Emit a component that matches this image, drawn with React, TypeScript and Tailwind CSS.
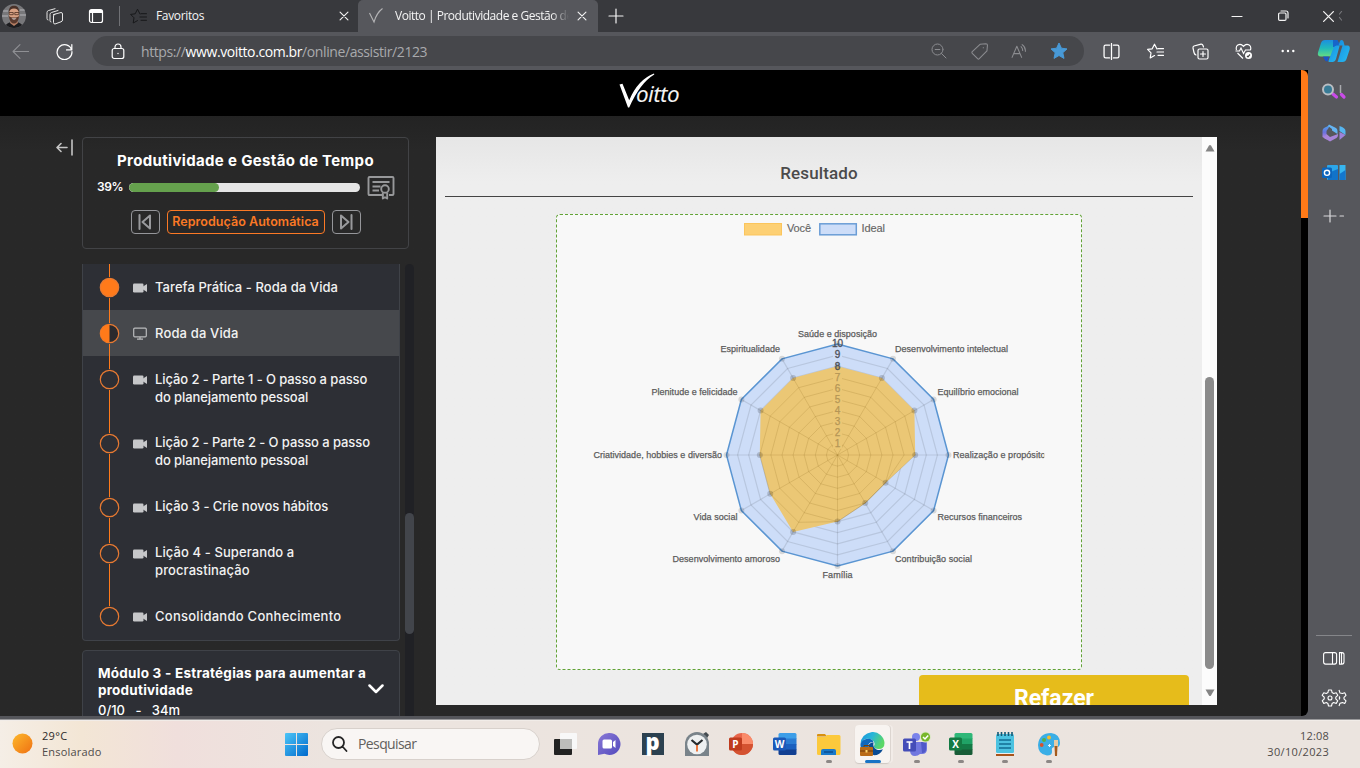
import React from "react";

const UI = "font-['Open_Sans',sans-serif]";
const MONT = "font-[Inter,sans-serif]";

function Line({ d, size = 16, box = 16, className = "", w = 1 }: { d: string; size?: number; box?: number; className?: string; w?: number }) {
  return (
    <svg width={size} height={size} viewBox={`0 0 ${box} ${box}`} fill="none" stroke="currentColor" strokeWidth={w} strokeLinecap="round" strokeLinejoin="round" className={`shrink-0 ${className}`}>
      <path d={d} />
    </svg>
  );
}

const CLOSE = "M3.5 3.5l9 9M12.5 3.5l-9 9";
const STAR_LIST = "M10 6L7.500 1.200 5.200 5.800 0.600 6.400 4 9.800 3.200 15 7.500 12.600M11 5.700H16.500M10 9h6.500M11 12.300h5.500";

function Avatar() {
  return (
    <svg width="24" height="24" viewBox="0 0 24 24" className="shrink-0">
      <defs>
        <clipPath id="av"><circle cx="12" cy="12" r="12" /></clipPath>
      </defs>
      <g clipPath="url(#av)">
        <rect width="24" height="24" fill="#77777a" />
        <path d="M0 7h6M0 12h6M18 6h6M18 11h6" stroke="#96969a" strokeWidth="2" />
        <path d="M3 24c0-5 5-6 9-6s9 1 9 6z" fill="#1c1c1f" />
        <path d="M9 16h6l1 3-4 3-4-3z" fill="#b98065" />
        <ellipse cx="12" cy="10" rx="5.2" ry="7.2" fill="#d8a183" />
        <path d="M6.8 12c1 6 3 7.5 5.2 7.5s4.200-1.500 5.200-7.500c-1.500 1-3 1.500-5.200 1.500s-3.700-.5-5.200-1.500z" fill="#5a3a2e" />
        <path d="M6.800 8.500C7 3 9 1.800 12 1.800s5 1.200 5.200 6.700C16 6 15 4.500 12 4.500S8 6 6.800 8.500z" fill="#4a3128" />
        <path d="M7 8.500h4.200v2.200H7.400zM12.800 8.500H17l-.4 2.200h-3.800z" fill="none" stroke="#4c3022" strokeWidth=".8" />
        <path d="M9.500 14.500q2.500 1.800 5 0z" fill="#fff" />
      </g>
    </svg>
  );
}

function TabBar() {
  return (
    <div className={`flex h-8 w-full shrink-0 bg-[#38393d] text-[12px] text-[#f4f4f4] ${UI}`}>
      <div className="flex w-[28px] items-center pl-[2px]"><Avatar /></div>
      <div className="flex w-[52px] items-center justify-center">
        <Line size={17} box={17} className="text-[#e6e6e6]" d="M7.500 6.500L15 4.500Q16.500 4.500 16.500 6v6Q16.500 13.300 15 13.800L9 16Q7.500 16 7.500 14.500V8Q7.500 6.500 9 6.300M5 14Q4 14 4 12.500V6.500Q4 5 5.500 4.500L12 2.500M2 12Q1 12 1 10.500V4.500Q1 3 2.500 2.500L9 .7" />
      </div>
      <div className="flex w-[32px] items-center justify-center">
        <svg width="16" height="16" viewBox="0 0 16 16" fill="none" stroke="#fff" strokeWidth="1.200"><rect x="1.500" y="1.500" width="13" height="13" rx="2" /><path d="M2 3.500h12" strokeWidth="3" /><path d="M4.500 5v9" /></svg>
      </div>
      <div className="flex w-[18px] items-center pl-[7px]"><div className="h-5 w-px bg-[#707175]" /></div>
      <div className="flex w-[228px] items-center">
        <Line size={17} box={17} className="text-[#17181a]" d={STAR_LIST} />
        <span className="ml-[9px] tracking-[-0.35px]">Favoritos</span>
        <Line className="mr-[7px] ml-auto" size={14} d={CLOSE} w={1.300} />
      </div>
      <div className="flex w-[240px] items-center rounded-t-[5px] bg-[#56575c]">
        <svg width="16" height="18" viewBox="0 0 16 18" className="ml-[10px] shrink-0"><path d="M1.500 6L6 15Q8.500 6 14.500 1.500" fill="none" stroke="#b5b5b7" strokeWidth="1.100" /></svg>
        <span className="ml-[11px] w-[174px] overflow-hidden tracking-[-0.48px] whitespace-nowrap [mask-image:linear-gradient(to_right,#000_90%,transparent)]">Voitto | Produtividade e Gestão de</span>
        <Line className="ml-[6px]" size={14} d={CLOSE} w={1.300} />
      </div>
      <div className="flex w-[35px] items-center justify-center"><Line size={16} d="M8 1v14M1 8h14" w={1.200} /></div>
      <div className="ml-auto flex">
        <div className="flex w-[46px] items-center justify-center"><Line size={12} box={12} d="M1 6.500h10" w={1.200} /></div>
        <div className="flex w-[46px] items-center justify-center"><Line size={12} box={12} d="M2.800 3h5q1.200 0 1.200 1.200v5q0 1.200-1.200 1.200h-5q-1.200 0-1.200-1.200v-5Q1.600 3 2.800 3M4 1h5q2 0 2 2v5" w={1.200} /></div>
        <div className="flex w-[54px] items-center pl-[16px]"><Line size={13} box={12} d="M1.500 1.500l9 9M10.500 1.500l-9 9" w={1.200} /><Line size={10} box={10} className="ml-[3px] text-[#77787c]" d="M3.500 0.500L1.500 3M1.500 6.500L3.500 9" w={1.200} /></div>
      </div>
    </div>
  );
}

function Cell({ w, children }: { w: string; children: React.ReactNode }) {
  return <div className={`flex shrink-0 items-center justify-center ${w}`}>{children}</div>;
}

function Toolbar() {
  return (
    <div className={`flex h-[38px] w-full shrink-0 items-center bg-[#56575c] text-white ${UI}`}>
      <Cell w="w-[40px]"><Line size={17} className="text-[#8f9094]" d="M7.500 1.500L1 8l6.500 6.500M1 8h15" /></Cell>
      <Cell w="w-[48px]"><Line size={17} d="M14.700 6.500A7 7 0 1 0 15 8M14.900 1.500v5h-5" w={1.150} /></Cell>
      <div className="ml-[4px] flex h-[30px] w-[992px] items-center rounded-full bg-[#46474b]">
        <svg width="14" height="17" viewBox="0 0 14 17" fill="none" stroke="#fff" strokeWidth="1.200" className="ml-[19px]"><rect x="1.200" y="5.500" width="11.600" height="10" rx="2" /><path d="M4 5.500V4a3 3 0 0 1 6 0v1.500" /><circle cx="7" cy="10.500" r=".7" fill="#fff" stroke="none" /></svg>
        <span className="ml-[16px] text-[14px] tracking-[-0.4px] whitespace-nowrap text-[#a9aaad]">https://<span className="text-white">www.voitto.com.br</span>/online/assistir/2123</span>
        <div className="mr-[6px] ml-auto flex text-[#8b8c90]">
          <Cell w="w-[40px]"><Line d="M10.500 10.500L15 15M12 6.500a5.500 5.500 0 1 1-11 0a5.500 5.500 0 0 1 11 0M4.200 6.500h4.600" /></Cell>
          <Cell w="w-[40px]"><Line size={17} d="M8.500 1.200L14 .7Q15.500.7 15.500 2L15 7.500 7.800 14.800Q7 15.500 6.200 14.800L1.200 9.800Q.5 9 1.200 8.200zM11.500 4.500h.3" /></Cell>
          <Cell w="w-[40px]"><Line size={17} d="M1 13.500L5.500 3 10 13.500M2.600 10h5.800M9.500 3.500Q11 5 11 7M10.500 1.500Q14 4 13.500 8" /></Cell>
          <Cell w="w-[39px]"><svg width="18" height="18" viewBox="0 0 18 18"><path d="M9 1l2.400 5.200 5.600.7-4.200 3.800 1.200 5.700L9 13.500l-5 2.900 1.200-5.700L1 6.900l5.600-.7z" fill="#4899d6" stroke="#4899d6" strokeWidth="1" strokeLinejoin="round" /></svg></Cell>
        </div>
      </div>
      <div className="ml-[5px] flex">
        <Cell w="w-[44px]"><Line size={17} d="M6.200 2H2.500Q1 2 1 3.500v9Q1 14 2.500 14h3.700M9.800 2h3.700Q15 2 15 3.500v9q0 1.500-1.500 1.500H9.800M8 .5v15" w={1.200} /></Cell>
        <Cell w="w-[45px]"><Line size={17} box={17} d={STAR_LIST} w={1.200} /></Cell>
        <Cell w="w-[44px]"><Line size={17} box={17} d="M7.500 6H14.500Q16 6 16 7.500v7q0 1.500-1.500 1.500h-7Q6 16 6 14.500v-7Q6 6 7.500 6M11 8.500v5M8.500 11h5M4 12Q2.500 11.500 2 9.500L1 5Q.8 3.500 2 3L9 1.200Q10.500 1 11 2.500L11.500 4" w={1.200} /></Cell>
        <Cell w="w-[44px]">
          <svg width="18" height="17" viewBox="0 0 18 17" fill="none" stroke="#fff" strokeWidth="1.150"><path d="M1.500 7Q.5 3.500 2.800 2 6 .3 8.500 3.300 11 .3 14.200 2 16.500 3.500 15.500 7M.5 8h4l1.500-3 2.500 5.500L10.500 7h5M2.500 10l5.500 5.500" /><circle cx="13.500" cy="12.500" r="3.500" fill="#fff" stroke="none" /><path d="M12 12.800l1 1 2-2.300" stroke="#444" /></svg>
        </Cell>
        <Cell w="w-[43px]"><svg width="14" height="4" viewBox="0 0 14 4" fill="#fff"><circle cx="1.700" cy="2" r="1.200" /><circle cx="7" cy="2" r="1.200" /><circle cx="12.300" cy="2" r="1.200" /></svg></Cell>
      </div>
      <svg width="34" height="24" viewBox="0 0 34 24" className="ml-[8px] shrink-0">
        <defs>
          <linearGradient id="cp1" x1="0" y1="0" x2="0" y2="1"><stop stopColor="#1c8fe0" /><stop offset=".5" stopColor="#21b9ba" /><stop offset="1" stopColor="#65dc82" /></linearGradient>
          <linearGradient id="cp2" x1="0" y1="0" x2="1" y2="1"><stop stopColor="#168de0" /><stop offset="1" stopColor="#27bdf2" /></linearGradient>
        </defs>
        <path d="M8 1h12l-4.500 14q-.8 2.500-3.500 2.500H4Q0 17.500 1 13.500L4 4Q5 1 8 1z" fill="url(#cp1)" />
        <path d="M16 1h4.500l2 4-1.500 3h-5z" fill="#1765ca" />
        <path d="M16.500 9q.8-2.500 3.200-2.500h3L19 20q-.8 3-3 3h-4q-1 0-.3-2z" fill="url(#cp2)" />
        <path d="M6 17.500h6l-1.500 5q-2.500 0-3-2z" fill="#1a55c8" />
        <path d="M21.500 6.500L23 2q.5-1 1.800-1 1.200 0 1.700 1.500L27.500 6.500h3.500Q33.500 7 32.500 11L29.500 20q-1 3-4 3h-5l5-16.500z" fill="url(#cp2)" />
      </svg>
    </div>
  );
}

function EdgeSidebar() {
  return (
    <div className="flex w-[52px] shrink-0 flex-col items-center bg-[#56575c] text-white">
      <svg width="26" height="19" viewBox="0 0 26 19" className="mt-[12px]">
        <path d="M12 12l3.500 3M20.500 12.500l2.500 2.500" stroke="#c94be8" strokeWidth="3.200" strokeLinecap="round" />
        <circle cx="7" cy="7.500" r="5" fill="#387b96" stroke="#b9bdc2" strokeWidth="2" /><path d="M19.500 3v8" stroke="#a9aaae" strokeWidth="1.500" />
      </svg>
      <svg width="26" height="20" viewBox="0 0 26 20" className="mt-[22px]">
        <defs><linearGradient id="m3" x1="0" y1="0" x2="0" y2="1"><stop stopColor="#4ca9ee" /><stop offset=".5" stopColor="#6b70dd" /><stop offset="1" stopColor="#c490e0" /></linearGradient></defs>
        <path d="M9 2L3 5Q1.500 6 1.500 8v6l4 2.500V8.500Q5.500 7 7 6z" fill="url(#m3)" />
        <path d="M8 1.500L15 5q1.500 1 1.500 3v3L11 7.500V6L7 3z" fill="#64b4f3" />
        <path d="M3 15l6 3.500 6.500-3.500q1.500-1 1.500-3v-1L9 14 5.500 11z" fill="#a985d9" />
        <path d="M18.500 3q6 2 6 5v4l-6-4z" fill="#55b5f0" /><path d="M18.500 9l6 3-6 5z" fill="#9d83db" />
      </svg>
      <svg width="26" height="18" viewBox="0 0 26 18" className="mt-[21px]">
        <rect x="6" y="1" width="11" height="15" rx="1" fill="#2ca6e9" /><path d="M7 9l10-4v11H7z" fill="#1173c9" /><rect x="18.500" y="1" width="6" height="15" fill="#37b6f0" /><path d="M18.500 10l6-4v10h-6z" fill="#1477ce" /><rect x="1" y="3.500" width="10" height="10.500" rx="1.500" fill="#0b65bd" /><circle cx="6" cy="8.800" r="2.600" fill="none" stroke="#fff" strokeWidth="1.400" />
      </svg>
      <Line size={22} box={22} className="mt-[23px] text-[#d9d9db]" d="M7 5v12M1 11h12M17 11h3.500" w={1.200} />
      <div className="mt-auto h-px w-9 bg-[#85868a]" />
      <svg width="22" height="13" viewBox="0 0 22 13" fill="none" stroke="#fff" strokeWidth="1.100" className="mt-[16px]"><rect x=".6" y=".6" width="13" height="11.500" rx="2" /><path d="M9.500.6v11.500M16.500.6h2.500q2 0 2 2v7.500q0 2-2 2h-2.500zM18.500.6v11.500" /></svg>
      <svg width="26" height="20" viewBox="0 0 26 20" fill="none" stroke="#fff" strokeWidth="1.100" strokeLinejoin="round" className="mt-[23px] mb-[8px]">
        <path d="M7.500 2h3l.6 2.600 1.600.9 2.500-.8 1.600 2.600-2 1.900v1.700l2 1.900-1.600 2.600-2.500-.8-1.600.9-.6 2.500h-3l-.6-2.500-1.600-.9-2.500.8-1.600-2.600 2-1.900V9.200l-2-1.900 1.600-2.600 2.500.8 1.600-.9z" /><circle cx="9" cy="10" r="2" />
        <path d="M18 2l1 3 2.500.5 2.200-.8L25 7.300l-2 2v1.600l2 2-1.300 2.500-2.200-.8-2.500.6-1 2.800M18 8.500q1.500 1.500 0 3" />
      </svg>
    </div>
  );
}

function VoittoLogo() {
  return (
    <div className="flex h-[39px] items-end">
      <svg width="36" height="36" viewBox="0 0 36 36" className="-mr-[19px]"><path d="M.5 11.500l3-.8 6.700 16.500Q19 6.500 35 .5l.3 1Q21 10 10.200 34.500H9z" fill="#fff" /></svg>
      <span className="font-['Noto_Sans',sans-serif] text-[22.500px] leading-[30px] tracking-[-0.6px] text-[#f2f2f2] italic">oitto</span>
    </div>
  );
}

function CourseCard() {
  return (
    <div className="flex h-[112px] w-[327px] flex-col items-center rounded-[4px] border border-[#424346]">
      <div className={`mt-[12px] text-[15px] leading-[22px] font-bold tracking-[0.34px] whitespace-nowrap text-white ${MONT}`}>Produtividade e Gestão de Tempo</div>
      <div className="flex w-full items-center pl-[14px]">
        <span className={`w-[32px] text-[12px] leading-4 font-semibold tracking-[-0.4px] text-white ${MONT}`}>39%</span>
        <div className="mt-[2px] h-[9px] w-[231px] overflow-hidden rounded-full bg-[#e5e5e5]"><div className="h-full w-[90px] rounded-full bg-[#65a14d]" /></div>
        <svg width="28" height="26" viewBox="0 0 28 26" fill="none" stroke="#97989a" strokeWidth="1.900" strokeLinejoin="round" className="ml-[7px] mt-[3px]"><path d="M16.500 20H2.500Q1.500 20 1.500 19V3q0-1 1-1h23q1 0 1 1v16q0 1-1 1H22M5.500 7h17M5.500 11.500h8M5.500 15.500H12" /><circle cx="18" cy="14" r="3.800" /><path d="M15.800 17.500V23.500l2.200-1.300 2.200 1.300v-6" /></svg>
      </div>
      <div className="mt-[9px] flex gap-[7px]">
        <div className="flex h-6 w-[29px] items-center justify-center rounded-[4px] border border-[#95969a]"><Line size={16} className="text-[#98999c]" w={2} d="M2.500 1v14M13 1.500v13L5.500 8z" /></div>
        <div className={`flex h-6 w-[158px] items-center justify-center rounded-[4px] border border-[#fb7925] text-[12.500px] font-semibold tracking-[0.05px] whitespace-nowrap text-[#fb7925] ${MONT}`}>Reprodução Automática</div>
        <div className="flex h-6 w-[29px] items-center justify-center rounded-[4px] border border-[#95969a]"><Line size={16} className="text-[#98999c]" w={2} d="M13.500 1v14M3 1.500v13L10.500 8z" /></div>
      </div>
    </div>
  );
}

type Lesson = { lines: string[]; state: "done" | "half" | "open"; h: string; track: string; screen?: boolean };
const LESSONS: Lesson[] = [
  { lines: ["Tarefa Prática - Roda da Vida"], state: "done", h: "h-[46px]", track: "mt-[14px] tracking-[0.07px]" },
  { lines: ["Roda da Vida"], state: "half", h: "h-[46px]", track: "mt-[14px] tracking-[0.15px]", screen: true },
  { lines: ["Lição 2 - Parte 1 - O passo a passo", "do planejamento pessoal"], state: "open", h: "h-[64px]", track: "mt-[14px] tracking-[-0.08px]" },
  { lines: ["Lição 2 - Parte 2 - O passo a passo", "do planejamento pessoal"], state: "open", h: "h-[63.500px]", track: "mt-[13px] tracking-[-0.08px]" },
  { lines: ["Lição 3 - Crie novos hábitos"], state: "open", h: "h-[46px]", track: "mt-[13px] tracking-[-0.02px]" },
  { lines: ["Lição 4 - Superando a", "procrastinação"], state: "open", h: "h-[63.500px]", track: "mt-[13px] tracking-[0.1px]" },
  { lines: ["Consolidando Conhecimento"], state: "open", h: "h-[46.500px]", track: "mt-[14px] tracking-[0.26px]" },
];

function LessonRow({ l, last }: { l: Lesson; last: boolean }) {
  return (
    <div className={`flex ${l.h} ${l.state === "half" ? "bg-[#46484c]" : ""}`}>
      <div className="ml-[16px] flex w-[21px] flex-col items-center">
        <div className="h-[13px] w-px bg-[#ff7a1a]" />
        <svg width="21" height="21" viewBox="0 0 21 21" className="shrink-0">
          <circle cx="10.500" cy="10.500" r="9.200" fill={l.state === "done" ? "#ff7a1a" : l.state === "half" ? "#2a2a2d" : "none"} stroke="#e87a32" strokeWidth="1.200" />
          {l.state === "half" && <path d="M10.500 1.300a9.200 9.200 0 0 0 0 18.400z" fill="#ff7a1a" />}
        </svg>
        {!last && <div className="w-px flex-1 bg-[#ff7a1a]" />}
      </div>
      <div className="mt-[17px] ml-[13px] w-[22px]">
        {l.screen ? (
          <svg width="14" height="13" viewBox="0 0 14 13" fill="none" stroke="#b9babc" strokeWidth="1.200"><rect x=".7" y="1.200" width="12.600" height="8.600" rx="1" /><path d="M7 10v2M4 12.200h6" /></svg>
        ) : (
          <svg width="14" height="13" viewBox="0 0 14 13" fill="#c6c7c9"><rect x="0" y="2.500" width="10.500" height="9" rx="1.200" /><path d="M10 5.500l4-2.500v8l-4-2.500z" /></svg>
        )}
      </div>
      <div className={`text-[13px] leading-[18px] font-medium whitespace-nowrap text-[#f2f2f2] ${l.track} ${MONT}`}>
        {l.lines.map((t) => <div key={t}>{t}</div>)}
      </div>
    </div>
  );
}

function Syllabus() {
  return (
    <div className="mt-[15px] flex h-[452px] overflow-hidden">
      <div className="w-[318px]">
        <div className="rounded-b-[4px] border border-t-0 border-[#3f4248] bg-[#2d2f35]">
          {LESSONS.map((l, i) => <LessonRow key={i} l={l} last={i === LESSONS.length - 1} />)}
        </div>
        <div className={`mt-[9px] flex h-[100px] rounded-t-[4px] border border-[#3f4248] bg-[#2d2f35] pt-[14px] pl-[15px] text-[13px] leading-[17px] text-white ${MONT}`}>
          <div className="w-[270px] whitespace-nowrap">
            <div className="text-[13.500px] font-bold tracking-[0.24px]">Módulo 3 - Estratégias para aumentar a</div>
            <div className="text-[13.500px] font-bold tracking-[0.22px]">produtividade</div>
            <div className="mt-[3px] font-medium whitespace-pre">0/10&nbsp;&nbsp; -&nbsp;&nbsp; 34m</div>
          </div>
          <Line size={16} className="mt-[16px] text-white" w={2.500} d="M1.500 4.500L8 11l6.500-6.500" />
        </div>
      </div>
      <div className="ml-[5px] flex w-[9px] flex-col rounded-t-full bg-[#202125] pt-[249px]">
        <div className="h-[121px] rounded-full bg-[#42454b]" />
      </div>
    </div>
  );
}

const CX = 837.5, CY = 455, STEP = 11.1;
const YOU = [8, 8, 8, 7, 5, 5, 6, 8, 7, 7, 8, 8];
const pt = (i: number, v: number): [number, number] => {
  const a = (i * Math.PI) / 6;
  return [CX + Math.sin(a) * v * STEP, CY - Math.cos(a) * v * STEP];
};
const poly = (vals: number[]) => vals.map((v, i) => pt(i, v).map((n) => n.toFixed(2)).join(",")).join(" ");
const LABELS: [string, number, number, number][] = [
  ["Saúde e disposição", 798, 337, 79],
  ["Desenvolvimento intelectual", 895, 352, 113],
  ["Equilíbrio emocional", 937.5, 395.3, 81],
  ["Realização e propósito", 953, 457.500, 92.5],
  ["Recursos financeiros", 937.5, 520, 84.5],
  ["Contribuição social", 895, 562, 77],
  ["Família", 822.5, 577.7, 30],
  ["Desenvolvimento amoroso", 672.5, 562, 107.5],
  ["Vida social", 693.5, 520, 44],
  ["Criatividade, hobbies e diversão", 593.5, 457.500, 128.5],
  ["Plenitude e felicidade", 651.5, 395.3, 86],
  ["Espiritualidade", 720.5, 352, 59.5],
];

function RadarChart() {
  return (
    <svg width="524" height="454" viewBox="557 215 524 454" className="block font-['Liberation_Sans',sans-serif]">
      <defs><clipPath id="canvas"><rect x="590" y="215" width="454.200" height="454" /></clipPath></defs>
      <rect x="744.500" y="223.500" width="37" height="11.500" fill="#fdd074" stroke="#fbc55c" />
      <text x="787" y="232.200" fontSize="11" fill="#666" stroke="#666" strokeWidth=".15" textLength="24">Você</text>
      <rect x="819.800" y="223.800" width="36.500" height="11" fill="#cdddf8" stroke="#6b9dd6" strokeWidth="1.500" />
      <text x="861.500" y="232.200" fontSize="11" fill="#666" stroke="#666" strokeWidth=".15" textLength="23.500">Ideal</text>
      <polygon points={poly(Array(12).fill(10))} fill="#cdddf8" stroke="#5a95d2" strokeWidth="1.500" />
      <g fill="none" stroke="#000" strokeOpacity=".1" strokeWidth="1.200">
        {[6, 7, 8, 9].map((v) => <polygon key={v} points={poly(Array(12).fill(v))} />)}
        {YOU.map((_, i) => i > 0 && <line key={i} x1={CX} y1={CY} x2={pt(i, 10)[0]} y2={pt(i, 10)[1]} />)}
      </g>
      <polygon points={poly(YOU)} fill="#ebc775" />
      <g fill="none" stroke="#8a6a20" strokeOpacity=".2">
        {[1, 2, 3, 4, 5, 6, 7].map((v) => <polygon key={v} points={poly(YOU.map((y) => Math.min(y, v)))} />)}
        {YOU.map((v, i) => i > 0 && <line key={i} x1={CX} y1={CY} x2={pt(i, v)[0]} y2={pt(i, v)[1]} />)}
      </g>
      <g fill="#000" fillOpacity=".17">
        {YOU.map((v, i) => <circle key={i} cx={pt(i, v)[0]} cy={pt(i, v)[1]} r="3" />)}
      </g>
      <g fill="#000" fillOpacity=".13">
        {YOU.map((_, i) => <circle key={i} cx={pt(i, 10)[0]} cy={pt(i, 10)[1]} r="3" />)}
      </g>
      {[1, 2, 3, 4, 5, 6, 7].map((v) => <rect key={v} x={CX - 4.5} y={CY - v * STEP - 5} width="9" height="10" fill="#ebc775" />)}
      <rect x={CX - 4.5} y={CY - 9 * STEP - 5} width="9" height="10" fill="#cdddf8" />
      <g fontSize="10" textAnchor="middle">
        {[1, 2, 3, 4, 5, 6, 7, 8, 9, 10].map((v) => (
          <text key={v} x={CX} y={CY - v * STEP + 3.300} fill={v > 7 ? "#4d5058" : "#b59656"} stroke={v > 7 ? "#4d5058" : "#b59656"} strokeWidth={v > 7 ? 0.3 : 0.25}>{v}</text>
        ))}
      </g>
      <g fontSize="9" fill="#5c5c5c" stroke="#5c5c5c" strokeWidth=".25" clipPath="url(#canvas)">
        {LABELS.map(([t, x, y, w]) => <text key={t} x={x} y={y} textLength={w}>{t}</text>)}
      </g>
    </svg>
  );
}

function ResultPanel() {
  return (
    <div className="flex h-[568px] w-[781px] overflow-hidden bg-[#fcfcfc]">
      <div className="flex w-[766px] flex-col items-center bg-linear-to-b from-[#e6e6e6] to-[#eeeeee] to-[45px]">
        <div className="mt-[24px] text-[17px] leading-[25px] font-medium tracking-[0.15px] text-[#4b4b4b] font-[Roboto,sans-serif]">Resultado</div>
        <div className="mt-[10px] h-px w-[748px] shrink-0 bg-[#444]" />
        <div className="mt-[17px] h-[456px] w-[526px] shrink-0 rounded-[4px] border border-dashed border-[#62a336] bg-[#f8f8f8]"><RadarChart /></div>
        <div className="mt-[5px] mr-[13px] flex h-[46px] w-[270px] shrink-0 justify-center self-end rounded-[4px] bg-[#e6bc1b] pt-[8px] text-[23px] leading-[32px] font-bold text-white font-[Roboto,sans-serif]">Refazer</div>
      </div>
      <div className="flex w-[15px] flex-col items-center">
        <svg width="10" height="8" viewBox="0 0 10 8" className="mt-[7px]"><path d="M.5 7.500L4 1.500q1-1.200 2 0L9.500 7.500z" fill="#858585" /></svg>
        <div className="mt-[225px] h-[292px] w-[9px] rounded-full bg-[#8b8b8b]" />
        <svg width="10" height="8" viewBox="0 0 10 8" className="mt-[20px]"><path d="M.5.5L4 6.500q1 1.200 2 0L9.500.5z" fill="#858585" /></svg>
      </div>
    </div>
  );
}

function OfficeIcon({ letter, dark, bands, round }: { letter: string; dark: string; bands: string[]; round?: boolean }) {
  return (
    <svg width="24" height="24" viewBox="0 0 24 24">
      {round ? (
        <><circle cx="13" cy="12" r="11" fill={bands[1]} /><path d="M13 1a11 11 0 0 1 11 11H13z" fill={bands[0]} /><path d="M2 12h22a11 11 0 0 1-22 0z" fill={bands[2]} /></>
      ) : (
        <><path d="M7 1h15q1.500 0 1.500 1.500V7H5.500V2.500Q5.500 1 7 1z" fill={bands[0]} /><rect x="5.500" y="6.500" width="18" height="6" fill={bands[1]} /><rect x="5.500" y="12" width="18" height="6" fill={bands[2]} /><path d="M5.500 17.500h18v4q0 1.500-1.500 1.500H7q-1.500 0-1.500-1.500z" fill={bands[3]} /></>
      )}
      <rect x="0" y="5.500" width="13" height="13" rx="1.500" fill={dark} />
      <text x="6.500" y="15.800" textAnchor="middle" fontSize="10" fontWeight="700" fill="#fff" className={UI}>{letter}</text>
    </svg>
  );
}

function TaskIcon({ children, running, active }: { children: React.ReactNode; running?: boolean; active?: boolean }) {
  return (
    <div className="flex w-[44.050px] flex-col items-center">
      <div className={`mt-[4px] flex h-[38px] w-[35px] shrink-0 items-center justify-center rounded-[4px] ${active ? "bg-[#f8f4f1] shadow-[1px_0_0_#dcd5d0,3px_0_0_#f2ece8,0_1px_1px_#cfc8c3]" : ""}`}>{children}</div>
      {running && <div className={`-mt-[3px] h-[3px] shrink-0 rounded-full ${active ? "w-4 bg-[#1873c5]" : "w-[6px] bg-[#8c8785]"}`} />}
    </div>
  );
}

function Taskbar() {
  return (
    <div className={`flex h-12 w-full shrink-0 border-t border-[#f1ece8] bg-[linear-gradient(90deg,#f5eee6_0%,#f3e6d5_6%,#f0dfdc_13%,#ece4df_24%,#ebe4df_100%)] text-[11px] leading-4 text-[#4f4b49] ${UI}`}>
      <div className="flex w-[285px] pl-[12px]">
        <svg width="21" height="21" viewBox="0 0 21 21" className="mt-[12px]"><defs><linearGradient id="sun" x1="0" y1="0" x2="1" y2="1"><stop stopColor="#fdb92c" /><stop offset="1" stopColor="#ef7012" /></linearGradient></defs><circle cx="10.500" cy="10.500" r="10" fill="url(#sun)" /></svg>
        <div className="mt-[7px] ml-[9px]"><div className="tracking-[0.3px] text-[#2d2b2a]">29°C</div><div className="tracking-[0.2px]">Ensolarado</div></div>
      </div>
      <svg width="23" height="23" viewBox="0 0 23 23" className="mt-[12px]"><defs><linearGradient id="win" x1="0" y1="0" x2="1" y2="1"><stop stopColor="#4cc5f7" /><stop offset="1" stopColor="#0069cc" /></linearGradient></defs><path d="M0 1q0-1 1-1h10v11H0zM12 0h10q1 0 1 1v10H12zM0 12h11v11H1q-1 0-1-1zM12 12h11v10q0 1-1 1H12z" fill="url(#win)" /></svg>
      <div className="mt-[7px] ml-[13px] flex h-8 w-[219px] items-center rounded-full border border-[#d8d1cc] bg-[#f9f6f4] pl-[10px] text-[14px] text-[#625f5d]">
        <Line size={16} w={1.800} className="text-[#252525]" d="M10.500 10.500L14.500 15M12 6.500a5.500 5.500 0 1 1-11 0a5.500 5.500 0 0 1 11 0" />
        <span className="ml-[10px] tracking-[-0.6px]">Pesquisar</span>
      </div>
      <div className="ml-[2.500px] flex">
        <TaskIcon><svg width="24" height="24" viewBox="0 0 24 24"><rect x="1" y="7" width="18" height="16" rx="1" fill="#222" /><rect x="7" y="1" width="17" height="16" rx="1" fill="#f8f8f8" /><path d="M7 7h12v10H7z" fill="#bdbdbb" /></svg></TaskIcon>
        <TaskIcon><svg width="24" height="24" viewBox="0 0 24 24"><defs><linearGradient id="chat" x1="0" y1="0" x2="1" y2="1"><stop stopColor="#8a79d6" /><stop offset="1" stopColor="#5249bd" /></linearGradient></defs><path d="M12.500 1a11 11 0 1 1-5 20.800L1 23V12A11 11 0 0 1 12.500 1z" fill="url(#chat)" /><rect x="5.500" y="7.500" width="9.500" height="9" rx="1.500" fill="#fff" /><path d="M16 10l2.500-2v8L16 14z" fill="#fff" /></svg></TaskIcon>
        <TaskIcon><div className="flex h-[22px] w-[22px] items-center justify-center bg-[#2c4150] pb-[6px] text-[22px] leading-none font-extrabold text-white">p</div></TaskIcon>
        <TaskIcon><svg width="24" height="24" viewBox="0 0 24 24"><path d="M18 2l3-2 3 3-2 3z" fill="#444b50" /><path d="M12 0a12 12 0 0 1 12 12v12H0V12A12 12 0 0 1 12 0z" fill="#79838a" /><circle cx="12" cy="12.500" r="9.800" fill="#eef0f1" /><path d="M6.500 8l5.500 4.500L17.500 8" stroke="#272b2e" strokeWidth="2.200" fill="none" /><path d="M12 13v6.500" stroke="#ed6b2d" strokeWidth="1.800" /></svg></TaskIcon>
        <TaskIcon><OfficeIcon letter="P" dark="#bf3b1e" bands={["#fa8b6a", "#e7654a", "#d45231"]} round /></TaskIcon>
        <TaskIcon><OfficeIcon letter="W" dark="#1b59b8" bands={["#3d9ee8", "#2b7cd3", "#1b60bf", "#123f92"]} /></TaskIcon>
        <TaskIcon running><svg width="25" height="24" viewBox="0 0 25 24"><path d="M1 3q0-1 1-1h7l2 2.500h-10z" fill="#d89110" /><path d="M1 5h8l2-2h12q1.500 0 1.500 1.500v17q0 1.500-1.500 1.500H2.500Q1 23 1 21.500z" fill="#fcc93c" /><path d="M5 23v-4q0-2 2-2h11q2 0 2 2v4z" fill="#1979ca" /><path d="M8 20h9" stroke="#0d4e91" strokeWidth="1.500" /></svg></TaskIcon>
        <TaskIcon running active>
          <svg width="25" height="24" viewBox="0 0 25 24"><defs><linearGradient id="ed" x1="0" y1="0" x2="1" y2=".4"><stop stopColor="#1b93dd" /><stop offset=".5" stopColor="#27b6d8" /><stop offset="1" stopColor="#5bd767" /></linearGradient></defs><path d="M12 0A12 12 0 0 1 24.500 11q0 6-6 6-5 0-4.500-3 2-4-2.500-6.500Q4 5 .5 12 1 2 12 0z" fill="url(#ed)" /><path d="M.5 12Q2 7 8 6.800q5 0 5.500 3.700Q9 9 8 14q0 7 7 8.500Q8 25 3 20 0 16.500.5 12z" fill="#1068bd" /><path d="M8.500 14q.5-3.500 5-3.500-1 5 3 7 3 1.200 6.500-.2-3 6-9 6-6-3.800-5.500-9.300z" fill="#0b4c94" /><rect x="0" y="15" width="13" height="9" rx="1" fill="#b96a16" /><path d="M0 19h13" stroke="#6c3909" /><path d="M4 15v-1.500h5V15" stroke="#74400e" fill="none" /><rect x="5.500" y="18" width="2" height="2.500" fill="#ffd46a" /></svg>
        </TaskIcon>
        <TaskIcon running><svg width="30" height="26" viewBox="0 0 30 26"><circle cx="14" cy="6" r="4" fill="#7b83eb" /><path d="M9 11h16v7q0 5-5 5h-2q-2 2-5 2-5 0-5-6z" fill="#7177df" /><path d="M19 11h5v7q0 4-4 4z" fill="#5059c9" /><rect x="1" y="7.500" width="13" height="13" rx="1.500" fill="#454db8" /><path d="M4.500 11h6M7.500 11v7" stroke="#fff" strokeWidth="1.700" /><circle cx="23.500" cy="6" r="5.500" fill="#dce7ca" /><circle cx="23.500" cy="6" r="4.600" fill="#78b72b" /><path d="M21 6l2 2 3.200-3.500" stroke="#fff" strokeWidth="1.500" fill="none" /></svg></TaskIcon>
        <TaskIcon running><OfficeIcon letter="X" dark="#137a43" bands={["#2fb778", "#20a366", "#147a46", "#185c37"]} /></TaskIcon>
        <TaskIcon running><svg width="20" height="25" viewBox="0 0 20 25"><rect x="1" y="2" width="18" height="19" rx="1.500" fill="#4cc2e0" /><path d="M3 0v4M6.500 0v4M10 0v4M13.500 0v4M17 0v4" stroke="#155773" strokeWidth="1.600" /><path d="M4 8h12M4 12h12M4 16h12" stroke="#126e92" strokeWidth="1.500" /><path d="M1 21h18v1H1z" fill="#eee" /><path d="M1 22h18v2H1z" fill="#a8541b" /></svg></TaskIcon>
        <TaskIcon running><svg width="24" height="25" viewBox="0 0 24 25"><path d="M14 1Q23 2 23 11q0 5-5 4-4 0-3 4 .5 4.500-5 4.500Q1 22.500 1 13 2 1 14 1z" fill="#3aaee6" /><circle cx="12" cy="5.500" r="2" fill="#f4bd2b" /><circle cx="7" cy="8" r="2" fill="#56b04a" /><circle cx="4.700" cy="13" r="1.900" fill="#d6522d" /><path d="M12.500 12v3M11 13.500h3" stroke="#e3f7ff" /><path d="M17 8h4v7h-4z" fill="#e4cba6" /><path d="M17.500 14h3l-.5 10h-2z" fill="#a45a1c" /></svg></TaskIcon>
      </div>
      <div className="mt-[7px] mr-[31px] ml-auto text-right"><div className="tracking-[0.2px]">12:08</div><div className="tracking-[0.33px]">30/10/2023</div></div>
    </div>
  );
}

export default function App() {
  return (
    <div className="flex h-[768px] w-[1360px] flex-col overflow-hidden bg-[#56575c]">
      <TabBar />
      <Toolbar />
      <div className="flex h-[646px] w-full shrink-0">
        <div className="flex w-[1308px] overflow-hidden rounded-br-[6px] bg-black">
          <div className="flex w-[1301px] flex-col bg-[#282828]">
            <header className="flex h-[46px] justify-center bg-black pr-[3px]"><VoittoLogo /></header>
            <div className="flex flex-1 bg-linear-to-b from-[#232323] to-[#282828] to-[35px] pt-[21px] pl-[56px]">
              <Line size={18} box={18} w={1.600} className="mt-[1px] text-[#c5c5c5]" d="M16 2v15M11 9.500H1.500M5 5.500l-4 4 4 4" />
              <div className="ml-[8px] flex w-[332px] flex-col"><CourseCard /><Syllabus /></div>
              <div className="ml-[22px]"><ResultPanel /></div>
            </div>
          </div>
          <div className="w-[7px]"><div className="h-[148px] rounded-tr-[6px] bg-[#ff7a18]" /></div>
        </div>
        <EdgeSidebar />
      </div>
      <div className="h-[4px] w-full shrink-0 border-b border-[#9a9a9c] bg-[#55565b]" />
      <Taskbar />
    </div>
  );
}
